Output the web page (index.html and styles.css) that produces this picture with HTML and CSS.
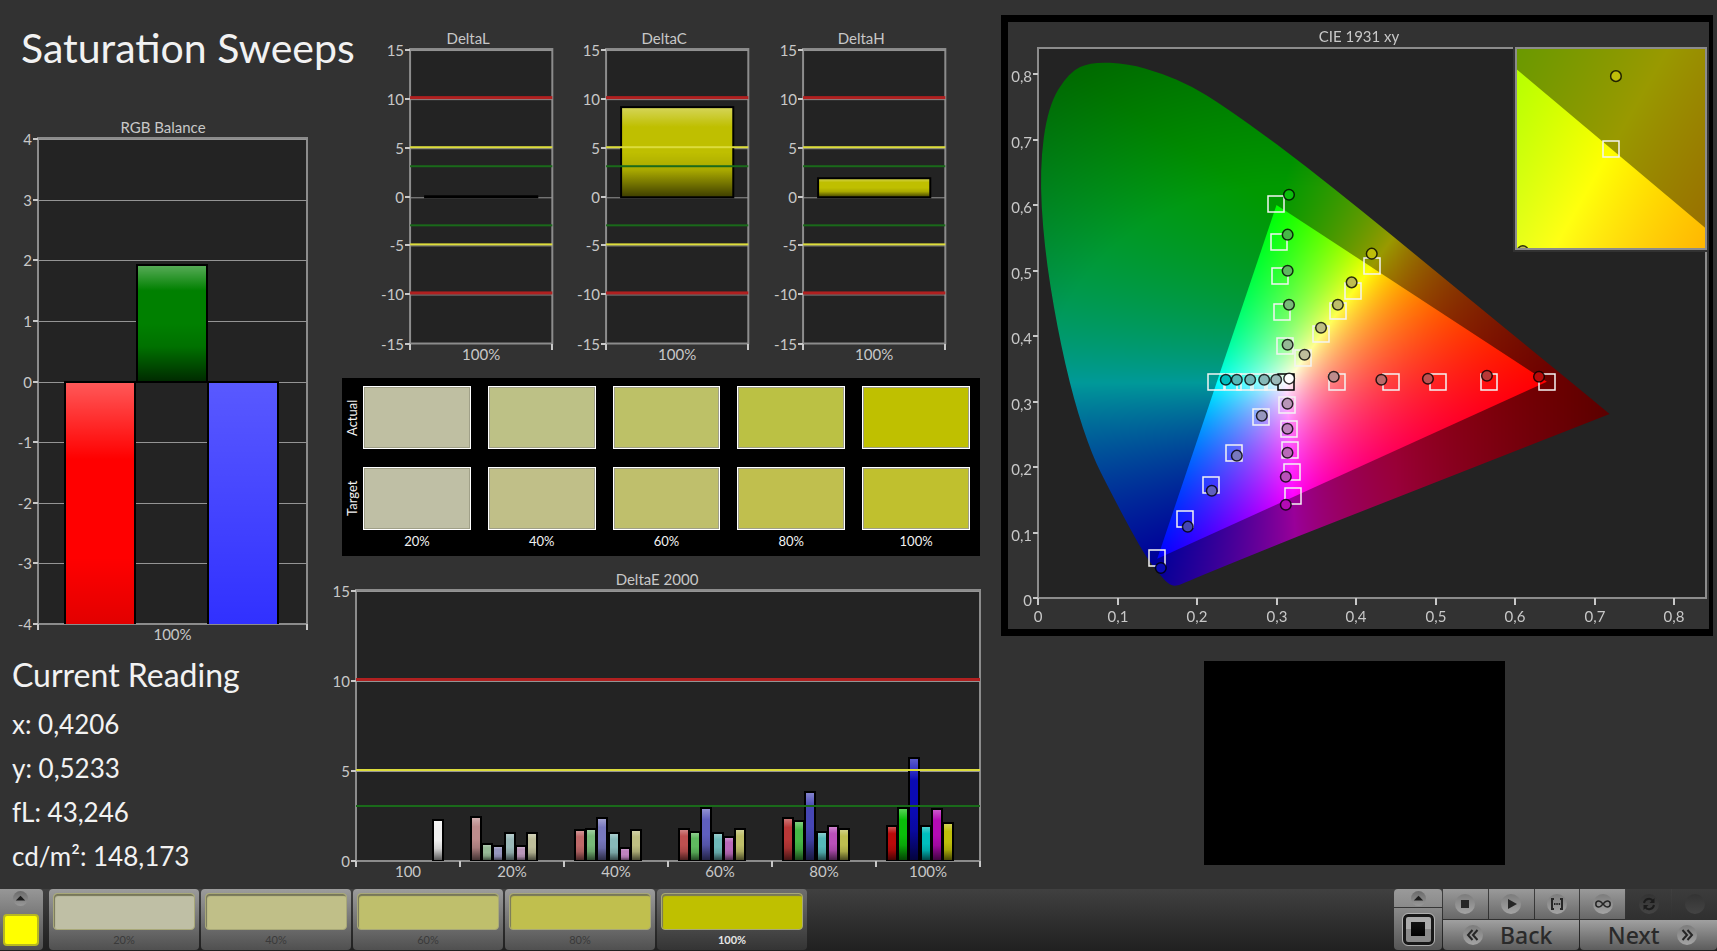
FILE: index.html
```
<!DOCTYPE html>
<html lang="en">
<head>
    <meta charset="UTF-8">
    <meta name="viewport" content="width=device-width, initial-scale=1.0">
    <title>Saturation Sweeps</title>
    <link rel="stylesheet" href="styles.css">
</head>
<body>
    <main class="dashboard">
        <section class="col-left">
            <h1>Saturation Sweeps</h1>
            <svg class="chart" id="rgbBalance"></svg>
            <div class="reading">
                <h2>Current Reading</h2>
                <p>x: 0,4206</p>
                <p>y: 0,5233</p>
                <p>fL: 43,246</p>
                <p>cd/m²: 148,173</p>
            </div>
        </section>

        <section class="col-middle">
            <div class="delta-row">
                <svg class="chart" id="deltaL"></svg>
                <svg class="chart" id="deltaC"></svg>
                <svg class="chart" id="deltaH"></svg>
            </div>
            <div class="swatches">
                <div class="row-names">
                    <span>Actual</span>
                    <span>Target</span>
                </div>
                <div class="swatch-grid">
                    <div class="swatch actual-20"></div>
                    <div class="swatch actual-40"></div>
                    <div class="swatch actual-60"></div>
                    <div class="swatch actual-80"></div>
                    <div class="swatch actual-100"></div>
                    <div class="swatch target-20"></div>
                    <div class="swatch target-40"></div>
                    <div class="swatch target-60"></div>
                    <div class="swatch target-80"></div>
                    <div class="swatch target-100"></div>
                    <span class="level">20%</span>
                    <span class="level">40%</span>
                    <span class="level">60%</span>
                    <span class="level">80%</span>
                    <span class="level">100%</span>
                </div>
            </div>
            <svg class="chart" id="deltaE"></svg>
        </section>

        <section class="col-right">
            <div class="cie">
                <canvas id="gamut" width="701" height="607"></canvas>
                <svg class="chart" id="cieAxes"></svg>
            </div>
            <div class="pattern"></div>
        </section>
    </main>

    <footer class="toolbar">
        <div class="current">
            <button class="round" aria-label="Show patterns">
                <svg viewBox="0 0 16 16"><path d="M3 10 8 5l5 5z"/></svg>
            </button>
            <div class="current-color"></div>
        </div>
        <div class="levels">
            <button class="level-btn"><span class="chip target-20"></span>20%</button>
            <button class="level-btn"><span class="chip target-40"></span>40%</button>
            <button class="level-btn"><span class="chip target-60"></span>60%</button>
            <button class="level-btn"><span class="chip target-80"></span>80%</button>
            <button class="level-btn selected"><span class="chip actual-100"></span>100%</button>
        </div>
        <div class="window-tools">
            <button class="window-up" aria-label="Show windows">
                <span class="round"><svg viewBox="0 0 16 16"><path d="M3 10 8 5l5 5z"/></svg></span>
            </button>
            <button class="window-size" aria-label="Window size">
                <span class="window-icon"></span>
            </button>
        </div>
        <div class="controls">
            <button class="tool" aria-label="Stop">
                <span class="disc"><svg viewBox="0 0 20 20"><path d="M6 6h8v8H6z"/></svg></span>
            </button>
            <button class="tool" aria-label="Play">
                <span class="disc"><svg viewBox="0 0 20 20"><path d="M7 5l9 5-9 5z"/></svg></span>
            </button>
            <button class="tool" aria-label="Read series">
                <span class="disc"><svg class="line" viewBox="0 0 20 20"><path d="M7 5H5v10h2M13 5h2v10h-2M7 10h1.500M9.300 10h1.500M11.600 10h1.500"/></svg></span>
            </button>
            <button class="tool" aria-label="Continuous">
                <span class="disc"><svg class="line thin" viewBox="0 0 20 20"><path d="M10 10C8 7.500 7 7 5.800 7a3 3 0 0 0 0 6C7 13 8 12.500 10 10s3-3 4.200-3a3 3 0 0 1 0 6C13 13 12 12.500 10 10z"/></svg></span>
            </button>
            <button class="tool off" aria-label="Refresh">
                <span class="disc"><svg class="line bold" viewBox="0 0 20 20"><path d="M5 9a5 5 0 0 1 9-2M15 11a5 5 0 0 1-9 2"/><path class="solid" d="M15.500 4v5h-5zM4.500 16v-5h5z"/></svg></span>
            </button>
            <button class="tool off" aria-label="Record">
                <span class="disc"></span>
            </button>
            <button class="nav back">
                <span class="disc"><svg class="line" viewBox="0 0 20 20"><path d="M9.500 5 5 10l4.500 5M14.500 5 10 10l4.500 5"/></svg></span>
                <span>Back</span>
            </button>
            <button class="nav next">
                <span>Next</span>
                <span class="disc"><svg class="line" viewBox="0 0 20 20"><path d="M5.500 5 10 10l-4.500 5M10.500 5 15 10l-4.500 5"/></svg></span>
            </button>
        </div>
    </footer>

    <script src="script.js"></script>
</body>
</html>
```
FILE: styles.css
```
* {
    box-sizing: border-box;
}
body {
    margin: 0;
    min-height: 100vh;
    display: flex;
    flex-direction: column;
    background-color: #323232;
    color: #f2f2f2;
    font-family: Lato, Carlito, Calibri, sans-serif;
}
h1, h2, p {
    margin: 0;
    font-weight: normal;
}
button {
    padding: 0;
    border: none;
    font-family: inherit;
    cursor: pointer;
}
.dashboard {
    flex: 1;
    display: grid;
    grid-template-columns: minmax(0, 332fr) minmax(0, 649fr) minmax(0, 736fr);
}

/* charts */
.chart {
    display: block;
    width: 100%;
    font-size: 15px;
}
.chart text {
    fill: #c8c8c8;
}
.plot {
    fill: #232323;
}
.frame {
    fill: none;
    stroke: #8c8c8c;
    stroke-width: 2;
}
.grid {
    fill: #949494;
}
.tick {
    stroke: #c8c8c8;
    stroke-width: 2;
}
.bar-edge {
    fill: none;
    stroke: #000;
    stroke-width: 2;
}
.limit-red {
    fill: #b02020;
}
.limit-yellow {
    fill: #dcdc3c;
}
.limit-green {
    fill: #1a6a1a;
}

/* left column */
.col-left h1 {
    height: 118px;
    padding: 23px 0 0 21px;
    font-size: 41px;
    line-height: 50px;
    white-space: nowrap;
}
.reading {
    padding: 0 0 0 12px;
}
.reading h2 {
    font-size: 32px;
    line-height: 50px;
}
.reading p {
    font-size: 26px;
    line-height: 44px;
}
.reading p:first-of-type {
    padding-top: 2px;
}

/* middle column */
.delta-row {
    display: grid;
    grid-template-columns: repeat(3, 1fr);
    padding: 28px 24px 0 36px;
}
.swatches {
    display: flex;
    gap: 3px;
    margin: 11px 1px 9px 10px;
    padding: 8px 10px 0 2px;
    height: 178px;
    background-color: #000;
    font-size: 13px;
}
.row-names {
    display: flex;
    flex-direction: column;
    gap: 18px;
}
.row-names span {
    height: 63px;
    writing-mode: vertical-rl;
    transform: rotate(180deg);
    text-align: center;
    line-height: 16px;
}
.swatch-grid {
    flex: 1;
    display: grid;
    grid-template-columns: repeat(5, 1fr);
    grid-template-rows: 63px 63px 18px;
    gap: 18px 17px;
}
.swatch {
    border: 1px solid #fff;
    box-shadow: inset 0 0 0 1px #a0a088;
}
.level {
    margin-top: -16px;
    text-align: center;
    line-height: 18px;
}
.actual-20 { background-color: #bfbfa2; }
.actual-40 { background-color: #bdc186; }
.actual-60 { background-color: #bdc167; }
.actual-80 { background-color: #bbc144; }
.actual-100 { background-color: #bfc000; }
.target-20 { background-color: #bfbfa5; }
.target-40 { background-color: #c0bf88; }
.target-60 { background-color: #bfbf6c; }
.target-80 { background-color: #c0bf4e; }
.target-100 { background-color: #c0c02e; }

/* right column */
.col-right {
    padding: 15px 4px 0 20px;
}
.cie {
    display: grid;
    border: solid #000;
    border-width: 7px 4px 7px 7px;
}
.cie > * {
    grid-area: 1 / 1;
    width: 100%;
}
.pattern {
    width: 301px;
    height: 204px;
    margin: 25px 0 0 203px;
    background-color: #000;
}

/* toolbar */
.toolbar {
    display: flex;
    height: 62px;
    background: linear-gradient(#404040, #202020);
}
.current {
    display: flex;
    flex-direction: column;
    align-items: center;
    gap: 8px;
    width: 43px;
    height: 61px;
    padding: 2px 2px 0 0;
    border-radius: 0 4px 4px 0;
    background: linear-gradient(#979797, #505050);
}
.round {
    width: 15px;
    height: 15px;
    border-radius: 50%;
    background: linear-gradient(#6a6a6a, #999);
}
.round svg {
    display: block;
    fill: #1c1c1c;
}
.current-color {
    width: 36px;
    height: 32px;
    border: 2px solid #b8b820;
    border-radius: 4px;
    background-color: #ff0;
}
.levels {
    display: flex;
    gap: 2px;
    margin-left: 6px;
}
.level-btn {
    display: flex;
    flex-direction: column;
    align-items: center;
    width: 150px;
    height: 61px;
    padding-top: 4px;
    border-radius: 4px;
    background: linear-gradient(#9c9c9c, #505050);
    color: #3a3a3a;
    font-size: 11px;
    line-height: 20px;
}
.level-btn.selected {
    background: linear-gradient(#6e6e6e, #343434);
    color: #e6e6e6;
    font-weight: bold;
}
.chip {
    width: 142px;
    height: 38px;
    border: 1px solid #a8a878;
    border-radius: 4px;
    box-shadow: inset 1px 2px 1px #77775a;
}
.window-tools {
    width: 48px;
    margin-left: auto;
}
.window-tools button {
    display: flex;
    justify-content: center;
    width: 100%;
}
.window-up {
    height: 18px;
    padding-top: 2px;
    border-radius: 4px 4px 0 0;
    background: linear-gradient(#9a9a9a, #8a8a8a);
}
.window-size {
    align-items: center;
    height: 42px;
    margin-top: 1px;
    border-radius: 0 0 4px 4px;
    background: linear-gradient(#8a8a8a, #565656);
}
.window-icon {
    width: 31px;
    height: 31px;
    border: 3px solid #181818;
    border-radius: 5px;
    outline: 1px solid #b0b0b0;
    background: linear-gradient(#111, #000) center / 14px 14px no-repeat, linear-gradient(#aaa 50%, #8a8a8a 50%);
}
.controls {
    display: grid;
    grid-template-columns: repeat(6, 1fr);
    grid-template-rows: 30px 30px;
    gap: 1px;
    width: 274px;
    margin-left: 1px;
}
.tool, .nav {
    display: flex;
    align-items: center;
    justify-content: center;
    background: linear-gradient(#9a9a9a, #686868);
    color: #2a2a2a;
}
.tool.off {
    background: linear-gradient(#3c3c3c, #303030);
}
.nav {
    grid-column: span 3;
    gap: 17px;
    background: linear-gradient(#a0a0a0, #5c5c5c);
    border-radius: 0 0 4px 4px;
    font-family: "Noto Sans", "Open Sans", sans-serif;
    font-size: 23px;
    font-weight: 500;
    line-height: 30px;
}
.back {
    padding-right: 7px;
}
.next {
    padding-left: 7px;
}
.disc {
    width: 20px;
    height: 20px;
    border-radius: 50%;
    background: linear-gradient(#7c7c7c, #a4a4a4);
}
.off .disc {
    background: linear-gradient(#333, #444);
}
.disc svg {
    display: block;
    fill: #262626;
}
.disc .line {
    fill: none;
    stroke: #262626;
    stroke-width: 2;
}
.disc .thin {
    stroke-width: 1.5;
}
.disc .bold {
    stroke: #1c1c1c;
}
.disc .solid {
    fill: #1c1c1c;
    stroke: none;
}
```
FILE: script.js
```
const SVG_NS = 'http://www.w3.org/2000/svg';

function add(parent, name, attrs, text) {
    const el = document.createElementNS(SVG_NS, name);
    for (const key in attrs) el.setAttribute(key, attrs[key]);
    if (text !== undefined) el.textContent = text;
    parent.appendChild(el);
    return el;
}

function line(parent, cls, x1, y1, x2, y2) {
    add(parent, 'line', { class: cls, x1, y1, x2, y2, 'shape-rendering': 'crispEdges' });
}

// light at the top, dark at the foot of each bar
function addGloss(svg) {
    const grad = add(add(svg, 'defs', {}), 'linearGradient', { id: svg.id + 'Gloss', x1: 0, y1: 0, x2: 0, y2: 1 });
    [[0, '#fff', 0.35], [0.22, '#fff', 0], [0.5, '#000', 0], [0.7, '#000', 0.12], [1, '#000', 0.68]].forEach(s => {
        add(grad, 'stop', { offset: s[0], 'stop-color': s[1], 'stop-opacity': s[2] });
    });
}

function barChart(id, o) {
    const svg = document.getElementById(id);
    svg.setAttribute('viewBox', `0 0 ${o.width} ${o.height}`);
    addGloss(svg);
    const [left, top, right, bottom] = o.plot;
    const yPos = v => Math.round(bottom - (v - o.min) / (o.max - o.min) * (bottom - top));

    add(svg, 'text', { x: o.titleX, y: top - 6, 'text-anchor': 'middle' }, o.title);
    add(svg, 'rect', { class: 'plot', x: left, y: top, width: right - left, height: bottom - top });
    add(svg, 'rect', { class: 'frame', x: left, y: top - 1, width: right - left, height: bottom - top + 1 });

    for (let v = o.min; v <= o.max; v += o.step) {
        const y = yPos(v);
        if (v > o.min) add(svg, 'rect', { class: 'grid', x: left, y: y, width: right - left, height: 1 });
        line(svg, 'tick', left - 5, y, left, y);
        add(svg, 'text', { x: left - 6, y: y + 6, 'text-anchor': 'end' }, v);
    }

    const clip = add(svg, 'clipPath', { id: id + 'Clip' });
    add(clip, 'rect', { x: left, y: top, width: right - left, height: bottom - top });
    const bars = add(svg, 'g', { 'clip-path': `url(#${id}Clip)` });
    const slot = (right - left) / o.categories.length;
    o.bars.forEach(b => {
        const y1 = Math.min(yPos(b.value), yPos(0));
        const box = {
            x: Math.round(left + b.cat * slot + b.x) + 1,
            y: y1,
            width: o.barWidth - 1,
            height: Math.max(Math.abs(yPos(b.value) - yPos(0)), 1)
        };
        add(bars, 'rect', { fill: b.color, ...box });
        add(bars, 'rect', { fill: `url(#${id}Gloss)`, ...box });
        add(bars, 'rect', { class: 'bar-edge', ...box });
    });

    (o.limits || []).forEach(l => {
        const size = l[1] === 'red' ? 3 : 2;
        add(svg, 'rect', { class: 'limit-' + l[1], x: left, y: yPos(l[0]) - size, width: right - left, height: size });
    });

    o.categories.forEach((name, i) => {
        add(svg, 'text', { x: left + (i + 0.5) * slot, y: bottom + 16, 'text-anchor': 'middle' }, name);
        line(svg, 'tick', left + i * slot, bottom, left + i * slot, bottom + 6);
    });
    line(svg, 'tick', right, bottom, right, bottom + 6);
}

barChart('rgbBalance', {
    title: 'RGB Balance', titleX: 163, width: 332, height: 532,
    plot: [38, 21, 307, 506], min: -4, max: 4, step: 1,
    categories: ['100%'], barWidth: 71,
    bars: [
        { cat: 0, x: 26, value: -5.8, color: '#ff0000' },
        { cat: 0, x: 98, value: 1.92, color: '#008000' },
        { cat: 0, x: 169, value: -40, color: '#0000ff' }
    ]
});

const deltaLimits = [[10, 'red'], [5, 'yellow'], [3, 'green'], [-3, 'green'], [-5, 'yellow'], [-10, 'red']];
[['deltaL', 'DeltaL', 0.05], ['deltaC', 'DeltaC', 9.2], ['deltaH', 'DeltaH', 1.9]].forEach(d => {
    barChart(d[0], {
        title: d[1], titleX: 100, width: 196, height: 338,
        plot: [42, 22, 184, 315], min: -15, max: 15, step: 5,
        categories: ['100%'], barWidth: 113, limits: deltaLimits,
        bars: [{ cat: 0, x: 14, value: d[2], color: '#bfbf00' }]
    });
});

// red, green, blue, cyan, magenta, yellow
const levelColors = [
    ['#be8c8c', '#96b996', '#9696be', '#9bb9b9', '#b996b9', '#bebe9b'],
    ['#be6969', '#78b978', '#7878be', '#87b9b9', '#be82be', '#bebe82'],
    ['#be5050', '#5fb95f', '#5f5fbe', '#6eb9b9', '#b969b9', '#bebe69'],
    ['#b93737', '#46b946', '#4646b4', '#55b9b9', '#b950b9', '#bebe50'],
    ['#b90a0a', '#0abe0a', '#0a0ab4', '#00bebe', '#b40ab4', '#bebe0a']
];
const deltaE = [
    [2.44, 0.94, 0.83, 1.54, 0.83, 1.54],
    [1.72, 1.78, 2.37, 1.54, 0.72, 1.72],
    [1.78, 1.61, 2.94, 1.54, 1.35, 1.78],
    [2.39, 2.22, 3.83, 1.61, 1.94, 1.78],
    [1.94, 2.94, 5.72, 1.94, 2.87, 2.11]
];
const deltaEBars = [{ cat: 0, x: 76, value: 2.28, color: '#f0f0f0' }];
deltaE.forEach((row, i) => row.forEach((value, j) => {
    deltaEBars.push({ cat: i + 1, x: 10 + j * 11.2, value, color: levelColors[i][j] });
}));
barChart('deltaE', {
    title: 'DeltaE 2000', titleX: 325, width: 649, height: 322,
    plot: [24, 26, 648, 296], min: 0, max: 15, step: 5,
    categories: ['100', '20%', '40%', '60%', '80%', '100%'], barWidth: 11,
    limits: [[10, 'red'], [5, 'yellow'], [3, 'green']],
    bars: deltaEBars
});

/* CIE 1931 xy */
const locus = [
    [0.177, 0.0185], [0.166, 0.019], [0.152, 0.037], [0.136, 0.063], [0.117, 0.103], [0.090, 0.165],
    [0.068, 0.218], [0.045, 0.302], [0.024, 0.4127], [0.0075, 0.5384], [0.0020, 0.6548], [0.0125, 0.7502],
    [0.0389, 0.803], [0.067, 0.8185], [0.1142, 0.8155], [0.1547, 0.8015], [0.1929, 0.7816], [0.2296, 0.7543],
    [0.3016, 0.6923], [0.3731, 0.6245], [0.4441, 0.5547], [0.5125, 0.4866], [0.5752, 0.4242],
    [0.627, 0.3725], [0.6658, 0.334], [0.719, 0.281], [0.3267, 0.094], [0.189, 0.0265]
];
const triangle = [[0.64, 0.33], [0.3, 0.6], [0.15, 0.06]];

const mainView = { left: 30, top: 26, right: 698, bottom: 576, x0: 0, y0: 0, sx: 795, sy: 655 };
const zoomView = { left: 508, top: 26, right: 698, bottom: 227, x0: 0.3943, y0: 0.4803, sx: 3800, sy: 4020 };

// full brightness colour of a chromaticity
function xyToRgb(x, y) {
    const X = x / y, Z = (1 - x - y) / y;
    const lin = [
        3.2406 * X - 1.5372 - 0.4986 * Z,
        -0.9689 * X + 1.8758 + 0.0415 * Z,
        0.0557 * X - 0.204 + 1.057 * Z
    ].map(v => Math.max(v, 0));
    const max = Math.max(...lin);
    return lin.map(v => 255 * v / max);
}

// brightness outside the triangle, lower towards the green and red ends
function outsideLevel(x, y) {
    const d = Math.hypot(x - 0.3127, y - 0.329);
    const green = Math.max(0, d - 0.3) * (y > 0.33 ? 0.75 : 0.2);
    const red = Math.max(0, x - 0.45) * 0.9;
    return 0.6 - (x > 0.45 ? red : green);
}

function layer(view, dim) {
    const w = view.right - view.left, h = view.bottom - view.top;
    const c = document.createElement('canvas');
    c.width = w;
    c.height = h;
    const ctx = c.getContext('2d');
    const img = ctx.createImageData(w, h);
    for (let j = 0; j < h; j++) {
        for (let i = 0; i < w; i++) {
            const x = view.x0 + (i + 0.5) / view.sx;
            const y = view.y0 + (h - j - 0.5) / view.sy;
            const k = dim ? outsideLevel(x, y) : 1;
            const rgb = xyToRgb(x, y);
            const p = (j * w + i) * 4;
            img.data[p] = rgb[0] * k;
            img.data[p + 1] = rgb[1] * k;
            img.data[p + 2] = rgb[2] * k;
            img.data[p + 3] = 255;
        }
    }
    ctx.putImageData(img, 0, 0);
    return c;
}

function toView(view, p) {
    return [view.left + (p[0] - view.x0) * view.sx, view.bottom - (p[1] - view.y0) * view.sy];
}

function locusPath(view) {
    const path = new Path2D();
    const pts = locus.map(p => toView(view, p));
    const n = pts.length;
    path.moveTo((pts[n - 1][0] + pts[0][0]) / 2, (pts[n - 1][1] + pts[0][1]) / 2);
    pts.forEach((p, i) => {
        const next = pts[(i + 1) % n];
        // the red end and the purple line stay straight
        if (i >= n - 3 && i < n - 1) path.lineTo(p[0], p[1]);
        else path.quadraticCurveTo(p[0], p[1], (p[0] + next[0]) / 2, (p[1] + next[1]) / 2);
    });
    path.closePath();
    return path;
}

function trianglePath(view) {
    const path = new Path2D();
    triangle.forEach(p => path.lineTo(...toView(view, p)));
    path.closePath();
    return path;
}

function drawView(ctx, view) {
    const w = view.right - view.left, h = view.bottom - view.top;
    ctx.fillStyle = '#232323';
    ctx.fillRect(view.left, view.top, w, h);
    [[locusPath(view), true], [trianglePath(view), false]].forEach(([path, dim]) => {
        ctx.save();
        ctx.beginPath();
        ctx.rect(view.left, view.top, w, h);
        ctx.clip();
        ctx.clip(path);
        ctx.drawImage(layer(view, dim), view.left, view.top);
        ctx.restore();
    });
}

const gamutCtx = document.getElementById('gamut').getContext('2d');
drawView(gamutCtx, mainView);
gamutCtx.fillStyle = '#323232';
gamutCtx.fillRect(505, 24, 196, 206);
drawView(gamutCtx, zoomView);

const targets = [
    [0.299, 0.602], [0.303, 0.543], [0.305, 0.4915], [0.307, 0.437], [0.311, 0.385],
    [0.4204, 0.5073], [0.3968, 0.4692], [0.3772, 0.4376], [0.356, 0.4035], [0.3335, 0.3669],
    [0.3755, 0.33], [0.4439, 0.33], [0.5026, 0.33], [0.5676, 0.33], [0.64, 0.33],
    [0.2245, 0.33], [0.2447, 0.33], [0.261, 0.33], [0.278, 0.33], [0.296, 0.33],
    [0.3138, 0.2947], [0.3155, 0.2585], [0.3168, 0.226], [0.3193, 0.1928], [0.321, 0.1562],
    [0.2803, 0.2768], [0.2468, 0.2218], [0.217, 0.172], [0.1847, 0.1206], [0.1499, 0.0615]
];
// same order as levelColors
const measured = [
    [[0.372, 0.3379], [0.4319, 0.3333], [0.4905, 0.3348], [0.5647, 0.3394], [0.6302, 0.3379]],
    [[0.314, 0.3867], [0.3157, 0.4478], [0.314, 0.4997], [0.314, 0.5547], [0.3157, 0.6157]],
    [[0.2815, 0.2783], [0.2501, 0.2173], [0.2186, 0.1638], [0.1884, 0.1089], [0.1545, 0.0458]],
    [[0.2996, 0.3333], [0.2845, 0.3333], [0.2669, 0.3333], [0.2501, 0.3333], [0.2362, 0.3333]],
    [[0.3138, 0.2967], [0.3138, 0.2585], [0.3138, 0.2218], [0.3117, 0.1852], [0.3117, 0.1424]],
    [[0.3353, 0.3714], [0.356, 0.4127], [0.3772, 0.4478], [0.3945, 0.4819], [0.4198, 0.5257]]
];

function square(parent, view, p, color) {
    const [x, y] = toView(view, p);
    add(parent, 'rect', {
        x: Math.round(x) - 8, y: Math.round(y) - 8, width: 16, height: 16,
        fill: 'none', stroke: color, 'stroke-width': 1.5
    });
}

function dot(parent, view, p, color) {
    const [x, y] = toView(view, p);
    add(parent, 'circle', { cx: x, cy: y, r: 5.3, fill: color, stroke: '#000', 'stroke-opacity': 0.8, 'stroke-width': 1.5 });
}

function drawCie() {
    const svg = document.getElementById('cieAxes');
    svg.setAttribute('viewBox', '0 0 701 607');
    const v = mainView;
    add(svg, 'text', { x: 351, y: 20, 'text-anchor': 'middle' }, 'CIE 1931 xy');
    add(svg, 'path', { class: 'frame', d: `M${zoomView.left - 3} ${v.top}H${v.left}V${v.bottom}H${v.right}V230` });
    for (let i = 0; i <= 8; i++) {
        const label = i ? '0,' + i : '0';
        const x = Math.round(v.left + i / 10 * v.sx);
        const y = Math.round(v.bottom - i / 10 * v.sy);
        line(svg, 'tick', x, v.bottom, x, v.bottom + 7);
        add(svg, 'text', { x: x, y: v.bottom + 24, 'text-anchor': 'middle' }, label);
        line(svg, 'tick', v.left - 5, y, v.left, y);
        add(svg, 'text', { x: v.left - 6, y: y + 8, 'text-anchor': 'end' }, label);
    }

    targets.forEach(p => square(svg, v, p, '#f4f4f4'));
    square(svg, v, [0.3117, 0.33], '#000');
    measured.forEach((row, j) => row.forEach((p, i) => dot(svg, v, p, levelColors[i][j])));
    dot(svg, v, [0.3159, 0.335], '#fff');

    const z = zoomView;
    const clip = add(svg, 'clipPath', { id: 'zoomClip' });
    add(clip, 'rect', { x: z.left, y: z.top, width: z.right - z.left, height: z.bottom - z.top });
    const g = add(svg, 'g', { 'clip-path': 'url(#zoomClip)' });
    square(g, z, [0.4193, 0.5053], '#f4f4f4');
    dot(g, z, [0.4206, 0.5233], '#bebe0a');
    dot(g, z, [0.3961, 0.4798], '#bebe50');
    add(svg, 'rect', { class: 'frame', x: z.left, y: z.top, width: z.right - z.left, height: z.bottom - z.top });
}

drawCie();
```
